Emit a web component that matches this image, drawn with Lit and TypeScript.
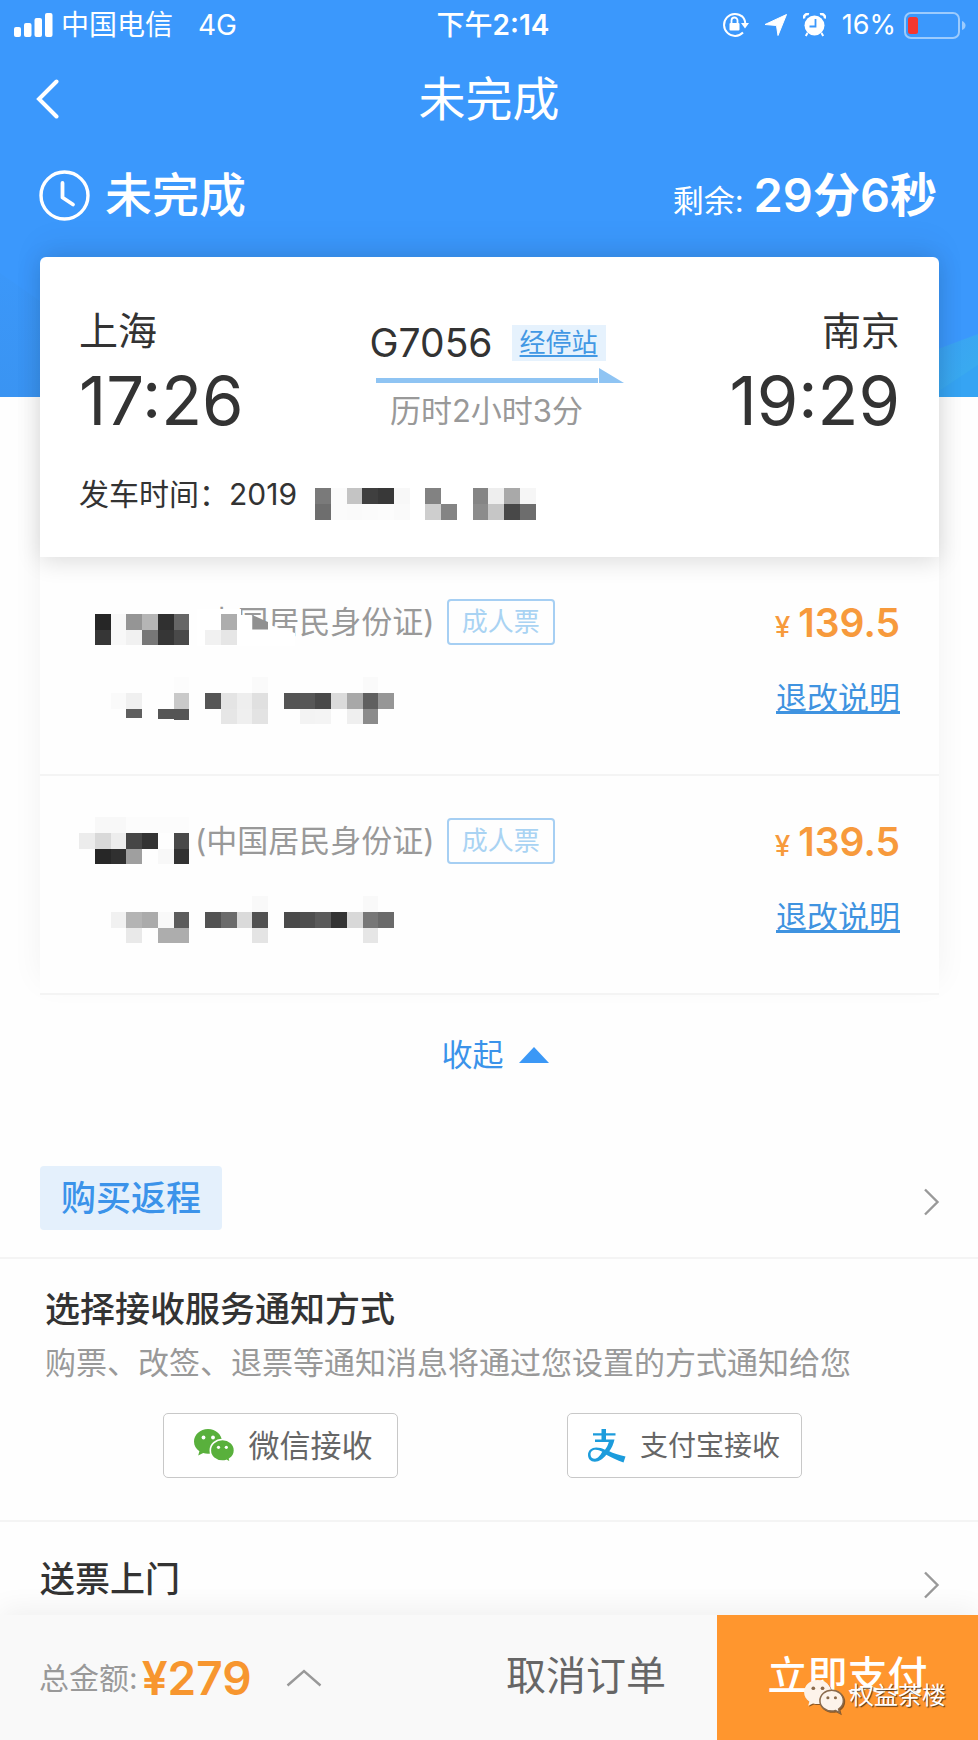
import { LitElement, html, css, svg, nothing } from "lit";
import { customElement, property, state } from "lit/decorators.js";

type Cell = [col: number, row: number, color: string, height?: number];

const CELL = 15.75;

/* Censored text, drawn as a run of square grey cells. */
@customElement("pixel-mask")
class PixelMask extends LitElement {
  @property({ attribute: false }) cells: Cell[] = [];
  @property({ type: Number }) cols = 1;
  @property({ type: Number }) rows = 2;
  @property({ attribute: false }) cover = "";
  @property({ attribute: false }) shard = "";

  static styles = css`
    :host {
      display: block;
      position: relative;
      z-index: 1;
      flex: none;
    }
    svg {
      display: block;
      overflow: visible;
    }
  `;

  render() {
    const w = this.cols * CELL;
    const h = this.rows * CELL;
    return html`<svg width=${w} height=${h} viewBox="0 0 ${w} ${h}" aria-hidden="true">
      ${this.cover ? svg`<polygon points=${this.cover} fill="#fff" />` : nothing}
      <g shape-rendering="crispEdges">
        ${this.cells.map(
          ([c, r, color, height]) =>
            svg`<rect x=${c * CELL} y=${r * CELL} width=${CELL} height=${height ?? CELL} fill=${color} />`
        )}
      </g>
      ${this.shard ? svg`<polygon points=${this.shard} fill="#909090" />` : nothing}
    </svg>`;
  }
}

const dateCells: Cell[] = [
  [0, 0, "#7a7a7a"], [0, 1, "#6e6e6e"], [1, 0, "#fbfbfb"], [1, 1, "#fbfbfb"],
  [2, 0, "#c4c4c4"], [2, 1, "#fafafa"], [3, 0, "#3f3f3f"], [3, 1, "#fbfbfb"],
  [4, 0, "#383838"], [4, 1, "#fcfcfc"], [5, 0, "#f8f8f8"], [5, 1, "#fafafa"],
  [7, 0, "#828282"], [7, 1, "#cecece"], [8, 1, "#848484"],
  [10, 0, "#858585"], [10, 1, "#8c8c8c"], [11, 0, "#eeeeee"], [11, 1, "#c6c6c6"],
  [12, 0, "#a9a9a9"], [12, 1, "#484848"], [13, 0, "#f6f6f6"], [13, 1, "#6d6d6d"],
];

interface Passenger {
  name: Cell[];
  number: Cell[];
  cover: string;
  shard: string;
  price: string;
}

const passengers: Passenger[] = [
  {
    name: [
      [1, 1, "#262626"], [2, 1, "#f8f8f8"], [3, 1, "#959595"], [4, 1, "#b5b5b5"], [5, 1, "#303030"], [6, 1, "#666666"],
      [1, 2, "#363636"], [2, 2, "#f8f8f8"], [3, 2, "#f1f1f1"], [4, 2, "#777777"], [5, 2, "#363636"], [6, 2, "#494949"],
      [8, 2, "#f1f1f1"], [9, 1, "#adadad"], [9, 2, "#e6e6e6"],
    ],
    number: [
      [2, 1, "#fafafa"], [3, 1, "#f0f0f0"], [3, 2, "#5f5f5f", 9], [5, 2, "#555555", 10],
      [6, 1, "#c9c9c9"], [6, 2, "#555555", 11], [6, 0, "#fcfcfc"],
      [8, 1, "#555555"], [9, 1, "#e4e4e4"], [9, 2, "#e6e6e6"], [10, 1, "#eeeeee"], [10, 2, "#efefef"],
      [11, 0, "#fafafa"], [11, 1, "#e0e0e0"], [11, 2, "#e3e3e3"],
      [13, 1, "#545454"], [14, 1, "#575757"], [15, 1, "#494949"], [14, 2, "#f3f3f3"], [15, 2, "#f4f4f4"],
      [16, 1, "#dbdbdb"], [17, 1, "#a8a8a8"], [17, 2, "#efefef"],
      [18, 0, "#fafafa"], [18, 1, "#5f5f5f"], [18, 2, "#8b8b8b"], [19, 1, "#969696"],
    ],
    cover: "118,11 162,11 162,17 172,17 189,25 194,28 216,35 216,48 118,48",
    shard: "173.25,17 189,24 189,31.5 173.25,31.5",
    price: "139.5",
  },
  {
    name: [
      [1, 0, "#f8f8f8"], [2, 0, "#f8f8f8"], [3, 0, "#fcfcfc"], [4, 0, "#fcfcfc"], [5, 0, "#fcfcfc"], [6, 0, "#fcfcfc"],
      [0, 1, "#ececec"], [1, 1, "#d9d9d9"], [2, 1, "#ededed"], [3, 1, "#464646"], [4, 1, "#333333"], [6, 1, "#494949"],
      [1, 2, "#272727"], [2, 2, "#303030"], [3, 2, "#9f9f9f"], [5, 2, "#f8f8f8"], [6, 2, "#323232"],
    ],
    number: [
      [2, 1, "#f1f1f1"], [3, 1, "#b4b4b4"], [4, 1, "#ababab"], [5, 1, "#f9f9f9"], [6, 1, "#5c5c5c"],
      [3, 2, "#e9e9e9"], [5, 2, "#adadad"], [6, 2, "#adadad"],
      [8, 1, "#525252"], [9, 1, "#6b6b6b"], [10, 1, "#dadada"], [11, 1, "#515151"], [11, 0, "#f9f9f9"], [11, 2, "#e4e4e4"],
      [13, 1, "#4a4a4a"], [14, 1, "#4e4e4e"], [15, 1, "#5a5a5a"], [16, 1, "#333333"],
      [17, 1, "#d8d8d8"], [18, 0, "#f9f9f9"], [18, 1, "#777777"], [18, 2, "#e6e6e6"], [19, 1, "#6a6a6a"],
    ],
    cover: "",
    shard: "",
    price: "139.5",
  },
];

const wechat = (back: string, gap: string, eye: string) => svg`
  <path d="M14 0C6.200 0 0 5.600 0 12.600c0 4 2 7.400 5.400 9.700L4.200 26.600l5-2.500c1.500.500 3.100.700 4.800.700 7.800 0 14-5.500 14-12.300S21.800 0 14 0Z" fill=${back} />
  <circle cx="9.500" cy="8.500" r="1.900" fill=${eye} /><circle cx="19" cy="8.500" r="1.900" fill=${eye} />
  <path d="M28.500 10.500c-6.800 0-12.200 4.800-12.200 10.900S21.700 32 28.500 32c1.400 0 2.700-.2 3.900-.6l4.200 2.300-1-3.700c2.900-2 4.900-5 4.900-8.600 0-6.100-5.300-10.900-12-10.900Z" fill=${back} stroke=${gap} stroke-width="1.600" />
  <circle cx="24.500" cy="18.300" r="1.600" fill=${eye} /><circle cx="32.300" cy="18.300" r="1.600" fill=${eye} />`;

const chevron = html`<svg class="chevron" width="17" height="28" viewBox="0 0 17 28" aria-hidden="true">
  <path d="M2 1.500 14.500 14 2 26.500" fill="none" stroke="#999" stroke-width="2.400" />
</svg>`;

@customElement("app-root")
class AppRoot extends LitElement {
  @state() expanded = true;

  static styles = css`
    :host {
      display: flex;
      flex-direction: column;
      min-height: 100vh;
      background: #fefefe;
      color: #333;
      font-family: Inter, "Noto Sans CJK SC", sans-serif;
      font-size: 31px;
      line-height: 44px;
    }
    * {
      box-sizing: border-box;
    }
    h1, h2, p, ul {
      margin: 0;
      padding: 0;
      font-weight: 400;
    }
    button {
      margin: 0;
      padding: 0;
      border: 0;
      background: none;
      color: inherit;
      font: inherit;
      cursor: pointer;
    }
    svg {
      display: block;
      flex: none;
    }
    .hero {
      position: relative;
      padding-bottom: 155px;
      background: #3b98fc;
      color: #fff;
    }
    .hills {
      position: absolute;
      left: 0;
      bottom: 0;
      width: 100%;
      height: 132px;
    }
    .statusbar {
      display: grid;
      grid-template-columns: 1fr auto 1fr;
      align-items: center;
      height: 50px;
      padding: 0 12px 0 14px;
      font-size: 28px;
    }
    .carrier {
      display: flex;
      align-items: center;
      gap: 8px;
    }
    .network {
      margin-left: 17px;
    }
    .clock {
      font-weight: 500;
      margin-left: 6px;
    }
    .clock b {
      font-weight: 600;
    }
    .indicators {
      display: flex;
      align-items: center;
      justify-content: flex-end;
      gap: 16px;
      font-size: 27px;
    }
    .power {
      display: flex;
      align-items: center;
      gap: 8px;
    }
    .nav {
      display: grid;
      grid-template-columns: 1fr auto 1fr;
      align-items: center;
      height: 98px;
      padding: 0 36px;
    }
    .nav h1 {
      font-size: 47px;
      line-height: 60px;
    }
    .summary {
      display: flex;
      align-items: center;
      height: 94px;
      padding: 0 41px 0 39px;
    }
    .summary h2 {
      flex: 1;
      margin-left: 15px;
      font-size: 47px;
      font-weight: 500;
      line-height: 60px;
    }
    .remain {
      display: flex;
      align-items: baseline;
      gap: 10px;
    }
    .remain b {
      font-size: 47px;
      font-weight: 600;
      line-height: 60px;
    }
    .sheet {
      position: relative;
      margin: -140px 39px 0 40px;
      box-shadow: 0 -14px 30px rgba(0, 0, 0, 0.05);
    }
    .trip {
      position: relative;
      padding: 52px 39px 38px;
      border-radius: 6px 6px 0 0;
      background: #fff;
      box-shadow: 0 4px 24px rgba(0, 0, 0, 0.14);
    }
    .route {
      display: grid;
      grid-template-columns: 1fr 240px 1fr;
    }
    .stop {
      display: flex;
      flex-direction: column;
      gap: 12px;
      font-size: 39px;
    }
    .stop.to {
      align-items: flex-end;
    }
    .stop time {
      font-size: 67px;
      line-height: 72px;
    }
    .leg {
      padding-top: 12px;
    }
    .train {
      display: flex;
      align-items: center;
      gap: 19px;
      font-size: 39px;
      white-space: nowrap;
    }
    .via {
      padding: 0 8px;
      background: #e6f2fd;
      color: #4298e4;
      font-size: 26px;
      line-height: 36px;
      text-underline-offset: 3px;
    }
    .arrow {
      margin: 3px 0 10px 6px;
      overflow: visible;
    }
    .duration {
      padding-right: 6px;
      color: #999;
      line-height: 36px;
      text-align: center;
    }
    .depart {
      display: flex;
      align-items: flex-end;
      gap: 18px;
      margin-top: 32px;
      font-size: 30px;
      line-height: 50px;
    }
    .passengers {
      list-style: none;
      background: #fefefe;
    }
    .passengers li {
      display: flex;
      justify-content: space-between;
      height: 219px;
      padding: 42px 39px 0;
      border-bottom: 2px solid #f4f4f4;
    }
    .identity {
      display: flex;
      align-items: center;
      height: 46px;
      color: #999;
    }
    .ident-name {
      width: 116px;
    }
    .adult {
      margin-left: 12px;
      padding: 0 13px;
      border: 2px solid #a6cff3;
      border-radius: 4px;
      color: #a9d3f3;
      font-size: 26px;
      line-height: 42px;
    }
    .number {
      margin-top: 32px;
    }
    .fare {
      display: flex;
      flex-direction: column;
      align-items: flex-end;
      gap: 25px;
    }
    .price {
      display: flex;
      align-items: baseline;
      gap: 8px;
      color: #f79a3c;
      font-size: 39px;
      font-weight: 600;
      line-height: 48px;
    }
    .price small {
      font-size: 28px;
      font-weight: 500;
    }
    .rules {
      color: #3f93e0;
      line-height: 44px;
      text-underline-offset: 2px;
    }
    .toggle {
      display: flex;
      align-items: center;
      align-self: center;
      gap: 15px;
      height: 120px;
      margin-left: 12px;
      color: #3b93ea;
    }
    .return {
      display: flex;
      align-items: center;
      justify-content: space-between;
      width: 100%;
      margin-top: 23px;
      padding: 28px 38px 27px 40px;
      border-bottom: 2px solid #f4f4f4;
      text-align: left;
    }
    .return span {
      padding: 0 21px;
      border-radius: 4px;
      background: #e4f0fc;
      color: #3b93ea;
      font-size: 35px;
      font-weight: 500;
      line-height: 64px;
    }
    .return .chevron {
      margin-top: 8px;
    }
    .notify {
      padding: 26px 45px 42px;
      border-bottom: 2px solid #f4f4f4;
    }
    .notify h2 {
      font-size: 35px;
      font-weight: 500;
      line-height: 48px;
    }
    .notify p {
      margin-top: 8px;
      color: #999;
      line-height: 44px;
      white-space: nowrap;
    }
    .channels {
      display: flex;
      justify-content: center;
      gap: 169px;
      margin: 28px 14px 0 0;
    }
    .channel {
      display: flex;
      align-items: center;
      justify-content: center;
      gap: 14px;
      width: 235px;
      height: 65px;
      padding-left: 6px;
      border: 1px solid #c8c8c8;
      border-radius: 5px;
      background: #fff;
      color: #666;
      white-space: nowrap;
    }
    .channel.ali {
      padding-left: 0;
      font-size: 28px;
    }
    .delivery {
      display: flex;
      align-items: center;
      justify-content: space-between;
      width: 100%;
      padding: 33px 38px 12px 40px;
      font-size: 35px;
      font-weight: 500;
      line-height: 48px;
      text-align: left;
    }
    .delivery .chevron {
      margin-top: 12px;
    }
    .paybar {
      position: sticky;
      bottom: 0;
      z-index: 2;
      display: flex;
      align-items: stretch;
      height: 125px;
      margin-top: auto;
      background: #f9f9f9;
      box-shadow: 0 -6px 26px rgba(0, 0, 0, 0.06);
    }
    .total {
      display: flex;
      align-items: center;
      flex: 1;
      padding-left: 39px;
      color: #999;
    }
    .sum {
      display: flex;
      align-items: center;
      font-size: 30px;
    }
    .sum b {
      margin-left: 4px;
      color: #f7962f;
      font-size: 46px;
      font-weight: 600;
    }
    .total button {
      margin-left: 34px;
    }
    .cancel {
      padding: 0 51px 3px;
      color: #666;
      font-size: 40px;
    }
    .pay {
      width: 261px;
      padding-bottom: 3px;
      background: #ff962e;
      color: #fff;
      font-size: 40px;
      font-weight: 500;
    }
    .watermark {
      position: absolute;
      right: 32px;
      bottom: 26px;
      display: flex;
      align-items: center;
      gap: 6px;
      color: #fff;
      font-size: 24px;
      line-height: 36px;
      text-shadow: 1px 1px 1px rgba(60, 40, 20, 0.9);
      pointer-events: none;
    }
    .watermark svg {
      overflow: visible;
      filter: drop-shadow(1px 1px 0 rgba(90, 60, 30, 0.7));
    }
  `;

  private statusBar() {
    return html`<div class="statusbar">
      <div class="carrier">
        <svg width="39" height="24" viewBox="0 0 39 24" fill="#fff" aria-hidden="true">
          <rect y="14" width="7" height="10" rx="2" /><rect x="10" y="10" width="7.500" height="14" rx="2" />
          <rect x="20.500" y="5" width="7.500" height="19" rx="2" /><rect x="31" width="7.500" height="24" rx="2" />
        </svg>
        <span>中国电信</span><span class="network">4G</span>
      </div>
      <div class="clock">下午<b>2:14</b></div>
      <div class="indicators">
        <svg width="27" height="26" viewBox="0 0 27 26" aria-hidden="true">
          <path d="M20.500 4.800A11 11 0 1 0 21 20.500M19.500 3.800a11 11 0 0 1 3.800 8" fill="none" stroke="#fff" stroke-width="2" />
          <path d="M19 11h8l-4 5.500Z" fill="#fff" />
          <rect x="7.500" y="11" width="10" height="7.500" rx="1" fill="#fff" />
          <path d="M9.500 11V8.500a3 3 0 0 1 6 0V11" fill="none" stroke="#fff" stroke-width="1.800" />
        </svg>
        <svg width="22" height="22" viewBox="0 0 22 22" aria-hidden="true">
          <path d="M21.500.500 13 21.500 11.500 11.500 0 10.500Z" fill="#fff" stroke="#fff" stroke-linejoin="round" />
        </svg>
        <svg width="23" height="24" viewBox="0 0 23 24" aria-hidden="true">
          <circle cx="11.500" cy="12.500" r="10" fill="#fff" />
          <path d="M1 5.500a4 4 0 0 1 5-4.500M22 5.500A4 4 0 0 0 17 1" fill="none" stroke="#fff" stroke-width="2.600" />
          <path d="M4.500 20 2.800 23M18.500 20l1.700 3" stroke="#fff" stroke-width="2" />
          <path d="M12.500 6v7.500H6.500" fill="none" stroke="#3b98fc" stroke-width="1.800" />
        </svg>
        <div class="power">
          <span>16%</span>
          <svg width="62" height="27" viewBox="0 0 62 27" aria-hidden="true">
            <rect x="1" y="1" width="54" height="25" rx="6" fill="none" stroke="#9ccbfd" stroke-width="2" />
            <rect x="4" y="5" width="10" height="17" rx="2.500" fill="#f5372f" />
            <path d="M58 9v9q3.500-1.500 3.500-4.500T58 9Z" fill="#9ccbfd" />
          </svg>
        </div>
      </div>
    </div>`;
  }

  private passenger(p: Passenger) {
    return html`<li>
      <div>
        <div class="identity">
          <pixel-mask class="ident-name" .cells=${p.name} .cols=${7} .rows=${3} .cover=${p.cover} .shard=${p.shard}></pixel-mask>
          <span>(中国居民身份证)</span>
          <span class="adult">成人票</span>
        </div>
        <pixel-mask class="number" .cells=${p.number} .cols=${20} .rows=${3}></pixel-mask>
      </div>
      <div class="fare">
        <span class="price"><small>¥</small>${p.price}</span>
        <a class="rules" href="#rules">退改说明</a>
      </div>
    </li>`;
  }

  render() {
    return html`
      <header class="hero">
        <svg class="hills" viewBox="0 0 978 132" preserveAspectRatio="none" aria-hidden="true">
          <defs>
            <linearGradient id="left" x1="0" y1="0" x2="0" y2="1">
              <stop offset="0" stop-color="#3b97f9" /><stop offset="1" stop-color="#3a94f2" />
            </linearGradient>
            <linearGradient id="right" x1="0" y1="0" x2="1" y2="1">
              <stop offset="0" stop-color="#3ba0f4" /><stop offset="1" stop-color="#38aeee" />
            </linearGradient>
          </defs>
          <path d="M0 8 60 50V132H0Z" fill="url(#left)" />
          <path d="M930 87 978 69V132H930Z" fill="url(#right)" />
          <path d="M930 132 978 100V132Z" fill="#36a4f3" />
        </svg>
        ${this.statusBar()}
        <nav class="nav">
          <button aria-label="返回">
            <svg width="24" height="40" viewBox="0 0 24 40" aria-hidden="true">
              <path d="M20.500 2.500 3 20l17.500 17.500" fill="none" stroke="#fff" stroke-width="4" stroke-linecap="round" />
            </svg>
          </button>
          <h1>未完成</h1>
        </nav>
        <div class="summary">
          <svg width="51" height="51" viewBox="0 0 51 51" fill="none" stroke="#fff" aria-hidden="true">
            <circle cx="25.500" cy="25.500" r="23.500" stroke-width="3.400" />
            <path d="M23.500 13v14.500L34 34.500" stroke-width="3.800" stroke-linecap="round" stroke-linejoin="round" />
          </svg>
          <h2>未完成</h2>
          <div class="remain"><span>剩余:</span><b>29分6秒</b></div>
        </div>
      </header>

      <section class="sheet">
        <div class="trip">
          <div class="route">
            <div class="stop"><span>上海</span><time>17:26</time></div>
            <div class="leg">
              <div class="train"><span>G7056</span><a class="via" href="#stops">经停站</a></div>
              <svg class="arrow" width="247" height="15" viewBox="0 0 247 15" fill="#8fc4f3" aria-hidden="true">
                <rect y="10" width="222" height="5" /><path d="M223 0v15h25Z" />
              </svg>
              <div class="duration">历时2小时3分</div>
            </div>
            <div class="stop to"><span>南京</span><time>19:29</time></div>
          </div>
          <div class="depart">
            <span>发车时间：2019</span>
            <pixel-mask .cells=${dateCells} .cols=${14}></pixel-mask>
          </div>
        </div>
        ${this.expanded ? html`<ul class="passengers">${passengers.map((p) => this.passenger(p))}</ul>` : nothing}
      </section>

      <button class="toggle" @click=${() => (this.expanded = !this.expanded)}>
        ${this.expanded ? "收起" : "展开"}
        <svg width="30" height="16" viewBox="0 0 30 16" aria-hidden="true"><path d="M15 0 30 16H0Z" fill="#3b98f6" /></svg>
      </button>

      <button class="return"><span>购买返程</span>${chevron}</button>

      <section class="notify">
        <h2>选择接收服务通知方式</h2>
        <p>购票、改签、退票等通知消息将通过您设置的方式通知给您</p>
        <div class="channels">
          <button class="channel">
            <svg width="41" height="34" viewBox="0 0 41 34" aria-hidden="true">${wechat("#59b03c", "#fff", "#fff")}</svg>
            微信接收
          </button>
          <button class="channel ali">
            <svg width="38" height="34" viewBox="0 0 38 34" aria-hidden="true">
              <path d="M13.500 0h4.500v4.200h9.500v2.300H18v4h8.500c-1 4.600-2.800 8.600-5.200 11.700 4 1.900 9.200 3.600 16.200 5.300l-2 6c-6.500-2.200-12.200-5-17.200-7.800-3.200 4-7 7-11.500 7C2.500 32.700 0 29.700 0 26c0-4.600 3.700-7.500 8.200-7.500 3 0 6 .9 8.800 2.200 1.700-2.200 3-4.800 3.800-7.800H7v-2.400h6.500v-4H5V4.200h8.500ZM14.300 22.800c-2.200-1.200-4.500-2-6.500-2-3.200 0-5.300 1.900-5.300 4.600 0 2.600 1.800 4.300 4.500 4.300 2.800 0 5.200-3.200 7.300-6.900Z" fill="#1c9cdc" fill-rule="evenodd" />
            </svg>
            支付宝接收
          </button>
        </div>
      </section>

      <button class="delivery">送票上门${chevron}</button>

      <footer class="paybar">
        <div class="total">
          <span class="sum">总金额:<b>¥279</b></span>
          <button aria-label="费用明细">
            <svg width="36" height="18" viewBox="0 0 36 18" aria-hidden="true">
              <path d="M1.500 16.500 18 2l16.500 14.500" fill="none" stroke="#999" stroke-width="2.400" />
            </svg>
          </button>
        </div>
        <button class="cancel">取消订单</button>
        <button class="pay">立即支付</button>
        <div class="watermark">
          <svg width="40" height="33" viewBox="0 0 41 34" aria-hidden="true">${wechat("#fdf3ea", "#8a6a4c", "#8a6a4c")}</svg>
          权益茶楼
        </div>
      </footer>
    `;
  }
}
